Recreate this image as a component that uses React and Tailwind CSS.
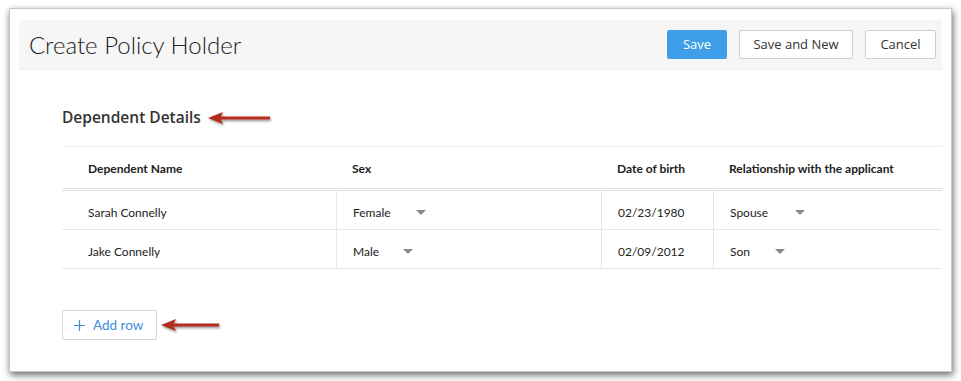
import React from 'react';

const open = { fontFamily: '"Open Sans", Lato, sans-serif' };
const lato = { fontFamily: 'Lato, "Open Sans", sans-serif' };

function Caret() {
  return (
    <svg width="10" height="6" viewBox="0 0 10 6" className="ml-auto">
      <path d="M0 0 L10 0 L5 5 Z" fill="#888" />
    </svg>
  );
}

function RedArrow({ width = 62 }) {
  return (
    <svg width={width + 4} height="16" viewBox={`0 0 ${width + 4} 16`} className="overflow-visible">
      <defs>
        <filter id="arrowShadow" x="-10%" y="-50%" width="130%" height="200%">
          <feDropShadow dx="1" dy="1.5" stdDeviation="1" floodColor="#000" floodOpacity="0.45" />
        </filter>
      </defs>
      <g filter="url(#arrowShadow)">
        <rect x="10" y="6.5" width={width - 10} height="3" fill="#b32d1e" />
        <path d="M0 8 L15 2 L12 8 L15 14 Z" fill="#b32d1e" />
      </g>
    </svg>
  );
}

const rows = [
  { name: 'Sarah Connelly', sex: 'Female', sexW: 'w-[73px]', dob: '02/23/1980', rel: 'Spouse', relW: 'w-[75px]' },
  { name: 'Jake Connelly', sex: 'Male', sexW: 'w-[60px]', dob: '02/09/2012', rel: 'Son', relW: 'w-[55px]' },
];

export default function App() {
  return (
    <div className="w-[961px] h-[381px] bg-white pt-[8px] pl-[9px]" style={lato}>
      <div className="w-[943px] h-[364px] bg-white border border-[#c8c8c8] shadow-[1px_3px_7px_rgba(0,0,0,0.6)] pt-[11px] px-[9px]">
        {/* Header */}
        <div className="h-[50px] bg-[#f6f6f6] border-b border-[#ececec] flex items-center pl-[10px] pr-[6px]">
          <h1 className="text-[24px] font-light text-[#222]">Create Policy Holder</h1>
          <div className="ml-auto flex items-center gap-3" style={open}>
            <button className="h-[29px] w-[60px] bg-[#3e9fe8] rounded-[2px] text-white text-[13px]">Save</button>
            <button className="h-[29px] w-[114px] bg-white border border-[#cfcfcf] rounded-[2px] text-[#333] text-[13px]">Save and New</button>
            <button className="h-[29px] w-[71px] bg-white border border-[#cfcfcf] rounded-[2px] text-[#333] text-[13px]">Cancel</button>
          </div>
        </div>

        {/* Body */}
        <div className="pl-[43px]">
          <div className="flex items-center h-[30px] mt-[33px] gap-[7px]">
            <h2 className="text-[15.5px] font-semibold text-[#333]" style={open}>Dependent Details</h2>
            <RedArrow width={62} />
          </div>

          <div className="mt-[13px] border-t border-[#eeeeee] text-[12px] text-[#222]">
            <div className="flex h-[44px] pt-[2px] items-center border-b-[3px] border-double border-[#e3e3e3] font-bold">
              <div className="w-[274px] pl-[26px]">Dependent Name</div>
              <div className="w-[265px] pl-[16px]">Sex</div>
              <div className="w-[112px] pl-[16px]">Date of birth</div>
              <div className="pl-[16px]">Relationship with the applicant</div>
            </div>
            {rows.map((r) => (
              <div key={r.name} className="flex h-[39px] items-center border-b border-[#e6e6e6]">
                <div className="w-[274px] pl-[26px] pt-[5px]">{r.name}</div>
                <div className="w-[265px] h-full pl-[16px] pt-[5px] border-l border-[#e6e6e6] flex items-center">
                  <div className={`flex items-center ${r.sexW}`}>
                    <span>{r.sex}</span>
                    <Caret />
                  </div>
                </div>
                <div className="w-[112px] h-full pl-[16px] pt-[5px] border-l border-[#e6e6e6] flex items-center">{r.dob}</div>
                <div className="h-full pl-[16px] pt-[5px] border-l border-[#e6e6e6] flex items-center">
                  <div className={`flex items-center ${r.relW}`}>
                    <span>{r.rel}</span>
                    <Caret />
                  </div>
                </div>
              </div>
            ))}
          </div>

          <div className="flex items-center mt-[41px] gap-[4px]">
            <button className="h-[30px] w-[95px] border border-[#d6d6d6] rounded-[2px] flex items-center pl-[11px] gap-[8px] text-[#3b8fd9] text-[13.5px]">
              <svg width="11" height="11" viewBox="0 0 11 11">
                <path d="M5.5 0 V11 M0 5.5 H11" stroke="#3b8fd9" strokeWidth="1.2" />
              </svg>
              <span>Add row</span>
            </button>
            <RedArrow width={58} />
          </div>
        </div>
      </div>
    </div>
  );
}
